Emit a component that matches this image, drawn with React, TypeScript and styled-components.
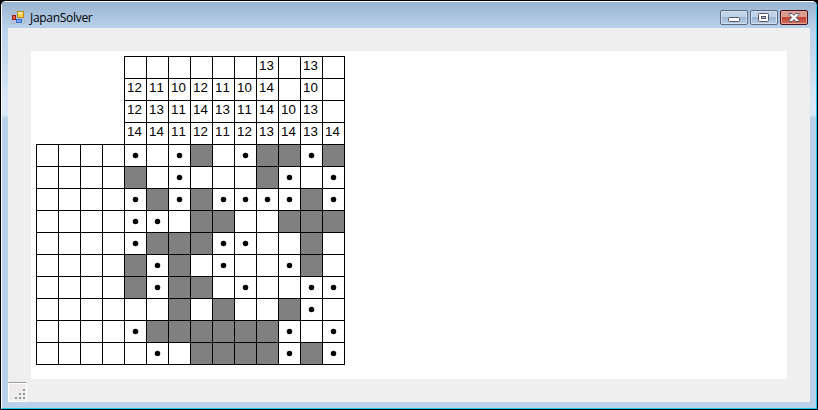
import React from "react";
import styled, { createGlobalStyle } from "styled-components";

const CELL = 22;

const GlobalStyle = createGlobalStyle`
  * { box-sizing: border-box; }
  body { margin: 0; background: #000; overflow: hidden; }
`;

const Window = styled.main`
  width: 818px;
  height: 410px;
  border: 1px solid #000;
  border-radius: 6px 6px 0 0;
  background: #b9d1ea;
  overflow: hidden;
`;

const Frame = styled.div`
  height: 408px;
  display: flex;
  flex-direction: column;
  border: 1px solid #fff;
  border-right-color: #1cc4ec;
  border-bottom-color: #1cc4ec;
  border-radius: 5px 5px 0 0;
  padding: 0 6px 6px;
  background:
    linear-gradient(#99b4d1 0, #b9d1ea 26px, #dae7f5 95px, #dce9f6 113px, #b9d1ea 116px);
`;

const TitleBar = styled.header`
  height: 26px;
  flex: none;
  display: flex;
  align-items: flex-start;
  margin: 0 -6px;
  padding: 0 8px 0 9px;
  background: linear-gradient(#99b4d1, #b9d1ea);
`;

const AppIcon = styled.svg`
  width: 14px;
  height: 14px;
  margin-top: 8px;
  flex: none;
`;

const Title = styled.h1`
  margin: 8px 0 0 5px;
  flex: 1;
  font: 400 12px/16px "Open Sans", "Noto Sans", sans-serif;
  letter-spacing: -0.3px;
  color: #000;
`;

const Controls = styled.div`
  display: flex;
  gap: 2px;
  margin-top: 8px;
`;

const ControlButton = styled.button<{ $danger?: boolean }>`
  width: 28px;
  height: 15px;
  padding: 0;
  display: grid;
  place-items: center;
  border: 1px solid ${(p) => (p.$danger ? "#43131c" : "#5a6b83")};
  border-radius: 2px;
  box-shadow: inset 0 0 0 1px ${(p) => (p.$danger ? "#e5a39b" : "#d2e0f0")};
  background: ${(p) =>
    p.$danger
      ? "linear-gradient(#dc9c90 0 45%, #bf3d2c 46%, #d3705b)"
      : "linear-gradient(#c0d3e9 0 45%, #99b3d2 46%, #b9d0e9)"};
  svg { display: block; }
`;

const MinimizeButton = styled(ControlButton)`
  align-items: end;
  padding-bottom: 2px;
`;

const Client = styled.section`
  flex: 1;
  display: flex;
  flex-direction: column;
  justify-content: space-between;
  padding-top: 23px;
  background: #efefef;
`;

const Canvas = styled.div`
  width: 756px;
  height: 328px;
  margin-left: 23px;
  padding: 5px;
  background: #fff;
`;

const Board = styled.div`
  display: grid;
  grid-template-columns: repeat(14, ${CELL}px);
  grid-auto-rows: ${CELL}px;
`;

const BlankCorner = styled.div`
  grid-area: 1 / 1 / span 4 / span 4;
`;

const Cell = styled.div<{ $filled?: boolean }>`
  width: ${CELL + 1}px;
  height: ${CELL + 1}px;
  border: 1px solid #000;
  background: ${(p) => (p.$filled ? "#808080" : "#fff")};
  display: grid;
  place-items: center;
`;

const Clue = styled(Cell)`
  place-items: start;
  padding: 1px 0 0 2px;
  font: 13.33px/15px "Liberation Sans", Arial, sans-serif;
  font-kerning: none;
  color: #000;
`;

const Dot = styled.svg`
  display: block;
  width: 7px;
  height: 7px;
`;

const StatusGrip = styled.footer`
  width: 19px;
  height: 20px;
  border: 1px solid #fff;
  border-top: 1px solid #999;
  box-shadow: inset 0 1px #fff;
  background: #eeecec;
  svg { display: block; }
`;

const clues = [
  ["", "", "", "", "", "", "13", "", "13", ""],
  ["12", "11", "10", "12", "11", "10", "14", "", "10", ""],
  ["12", "13", "11", "14", "13", "11", "14", "10", "13", ""],
  ["14", "14", "11", "12", "11", "12", "13", "14", "13", "14"],
];

const field = [
  "o_o#_o##o#",
  "#_o___#o_o",
  "o#o#oooo#o",
  "oo_##__###",
  "o###oo__#_",
  "#o#_o__o#_",
  "#o##_o__oo",
  "__#_#__#o_",
  "o######o_o",
  "_o_####o#o",
];

const gripDots = [[14, 6], [10, 10], [14, 10], [6, 14], [10, 14], [14, 14]];

export default function App() {
  return (
    <>
      <GlobalStyle />
      <Window>
        <Frame>
          <TitleBar>
            <AppIcon viewBox="0 0 14 14" shapeRendering="crispEdges">
              <path d="M.5 4.5v-4h5M.5 10.5v3h4M11.5 13.5h2v-4" fill="none" stroke="#b3b9c4" />
              <path d="M6.5 1.5h6v6h-6z" fill="#ffd04a" stroke="#bc8719" />
              <path d="M7 2h4v2H7z" fill="#fff0a8" />
              <path d="M1.5 5.5h3v4h-3z" fill="#e3664b" stroke="#9c1d16" />
              <path d="M5.5 9.5h5v3h-5z" fill="#76a3f4" stroke="#3a68cd" />
            </AppIcon>
            <Title>JapanSolver</Title>
            <Controls>
              <MinimizeButton aria-label="Minimize">
                <svg width="12" height="5" viewBox="0 0 12 5">
                  <rect x=".5" y=".5" width="11" height="4" rx="1" fill="#fff" stroke="#535666" />
                </svg>
              </MinimizeButton>
              <ControlButton aria-label="Maximize">
                <svg width="12" height="9" viewBox="0 0 12 9">
                  <rect x=".5" y=".5" width="10" height="8" rx="1" fill="#fff" stroke="#535666" />
                  <rect x="3.5" y="3.5" width="4" height="2" fill="#a9c0db" stroke="#535666" />
                </svg>
              </ControlButton>
              <ControlButton $danger aria-label="Close">
                <svg width="12" height="9" viewBox="0 0 12 9">
                  <path d="M1 .5h3.2L6 2.4 7.8.5H11v1L8.3 4.5 11 7.5v1H7.8L6 6.6 4.2 8.5H1v-1l2.7-3L1 1.5z" fill="#fff" stroke="#535666" />
                </svg>
              </ControlButton>
            </Controls>
          </TitleBar>
          <Client>
            <Canvas>
              <Board>
                <BlankCorner />
                {clues.flatMap((row, r) => row.map((value, c) => <Clue key={`clue-${r}-${c}`}>{value}</Clue>))}
                {field.flatMap((row, r) =>
                  Array.from("____" + row).map((mark, c) => (
                    <Cell key={`cell-${r}-${c}`} $filled={mark === "#"}>
                      {mark === "o" && (
                        <Dot viewBox="0 0 7 7">
                          <circle cx="3.5" cy="3.6" r="2.75" />
                        </Dot>
                      )}
                    </Cell>
                  ))
                )}
              </Board>
            </Canvas>
            <StatusGrip>
              <svg width="17" height="18" viewBox="0 0 17 18">
                {gripDots.map(([x, y]) => (
                  <rect key={`${x}-${y}`} x={x} y={y} width="2" height="2" fill="#999" />
                ))}
              </svg>
            </StatusGrip>
          </Client>
        </Frame>
      </Window>
    </>
  );
}
